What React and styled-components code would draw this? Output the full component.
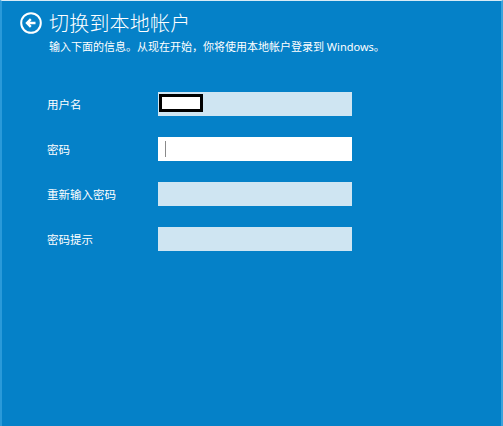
import React from "react";
import styled, { createGlobalStyle } from "styled-components";

const Global = createGlobalStyle`
  html, body { margin: 0; padding: 0; background: #0581c8; }
  body { font-family: "Noto Sans", "Noto Sans CJK SC", sans-serif; }
`;

const Page = styled.div`
  box-sizing: border-box;
  width: 503px;
  height: 426px;
  background: #0581c8;
  border-top: 1px solid #d9ebf6;
  border-left: 2px solid #2a9ad9;
  border-right: 2px solid #3aa3dc;
  color: #ffffff;
  overflow: hidden;
`;

const Header = styled.div`
  display: flex;
  align-items: center;
  gap: 7px;
  padding: 11px 0 0 18px;
  height: 22px;
`;

const BackButton = styled.div`
  width: 22px;
  height: 22px;
  display: flex;
  align-items: center;
  justify-content: center;
`;

const Title = styled.h1`
  margin: 0;
  font-family: "Noto Sans CJK SC", sans-serif;
  font-weight: 300;
  font-size: 20px;
  line-height: 22px;
  letter-spacing: 0.2px;
`;

const Subtitle = styled.p`
  margin: 5px 0 0 47px;
  font-family: "Noto Sans", "Noto Sans CJK SC", sans-serif;
  font-size: 11px;
  line-height: 16px;
`;

const Form = styled.div`
  display: grid;
  grid-template-columns: 111px 194px;
  grid-auto-rows: 24px;
  row-gap: 21px;
  margin: 37px 0 0 45px;
`;

const Label = styled.div`
  display: flex;
  align-items: center;
  font-family: "Noto Sans CJK SC", sans-serif;
  font-size: 11.5px;
  line-height: 16px;
`;

const Field = styled.div`
  box-sizing: border-box;
  display: flex;
  align-items: center;
  padding: 1px;
  background: ${(p) => (p.$focused ? "#ffffff" : "#cfe5f2")};
`;

const Redaction = styled.span`
  box-sizing: border-box;
  width: 44px;
  height: 18px;
  margin-top: 1px;
  align-self: flex-start;
  border: 3px solid #000000;
  background: #ffffff;
`;

const Caret = styled.span`
  width: 1px;
  height: 16px;
  margin-left: 6px;
  background: #8a8a8a;
`;

function BackIcon() {
  return (
    <svg width="22" height="22" viewBox="0 0 22 22" fill="none">
      <circle cx="11" cy="11" r="9.8" stroke="#fff" strokeWidth="2" />
      <path
        d="M15.5 11H7.2M10.8 7.2L7 11l3.8 3.8"
        stroke="#fff"
        strokeWidth="2.4"
        strokeLinecap="butt"
        strokeLinejoin="miter"
      />
    </svg>
  );
}

const rows = [
  { label: "用户名", kind: "redacted" },
  { label: "密码", kind: "focused" },
  { label: "重新输入密码", kind: "plain" },
  { label: "密码提示", kind: "plain" },
];

export default function App() {
  return (
    <>
      <Global />
      <Page>
        <Header>
          <BackButton>
            <BackIcon />
          </BackButton>
          <Title>切换到本地帐户</Title>
        </Header>
        <Subtitle>输入下面的信息。从现在开始，你将使用本地帐户登录到 Windows。</Subtitle>
        <Form>
          {rows.map((r) => (
            <React.Fragment key={r.label}>
              <Label>{r.label}</Label>
              <Field $focused={r.kind === "focused"}>
                {r.kind === "redacted" && <Redaction />}
                {r.kind === "focused" && <Caret />}
              </Field>
            </React.Fragment>
          ))}
        </Form>
      </Page>
    </>
  );
}
